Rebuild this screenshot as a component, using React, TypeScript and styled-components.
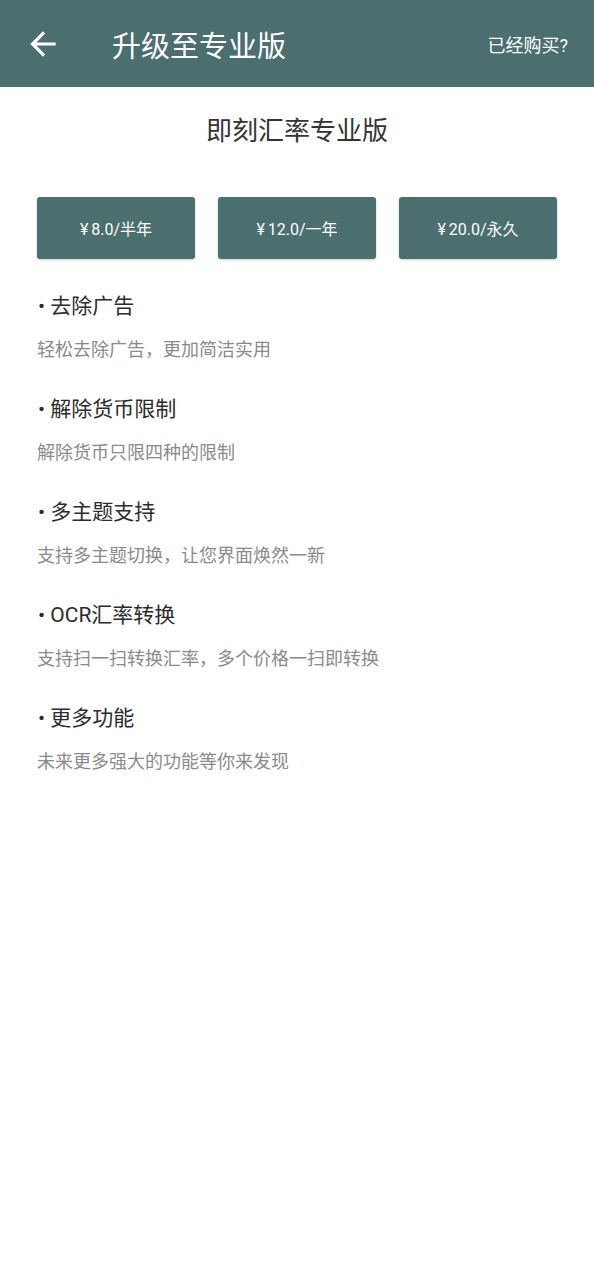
import * as React from "react"
import styled, { createGlobalStyle } from "styled-components"

const GlobalStyle = createGlobalStyle`
  html, body {
    margin: 0;
    padding: 0;
    background: #ffffff;
  }
  body {
    font-family: "Roboto", "Noto Sans CJK SC", sans-serif;
  }
`

const Page = styled.div`
  width: 100%;
  min-height: 1280px;
  background: #ffffff;
`

const Header = styled.header`
  height: 87px;
  background: #4b6e6e;
  display: flex;
  align-items: center;
  padding: 0 26px 0 24px;
  box-sizing: border-box;
  color: #ffffff;
`

const BackButton = styled.button`
  width: 38px;
  height: 38px;
  padding: 0;
  border: none;
  background: none;
  color: #ffffff;
  display: flex;
  align-items: center;
  justify-content: center;
`

const HeaderTitle = styled.h1`
  margin: 0 0 0 50px;
  flex: 1;
  font: 400 29px "Roboto", "Noto Sans CJK SC", sans-serif;
`

const HeaderAction = styled.span`
  font: 400 18px "Roboto", "Noto Sans CJK SC", sans-serif;
`

const Content = styled.main`
  padding: 0 37px;
`

const Title = styled.h2`
  margin: 26px 0 0;
  text-align: center;
  color: #333333;
  font: 400 26px/36px "Roboto", "Noto Sans CJK SC", sans-serif;
`

const PlanRow = styled.div`
  display: grid;
  grid-template-columns: repeat(3, 1fr);
  gap: 23px;
  margin-top: 48px;
`

const PlanButton = styled.button`
  height: 62px;
  border: none;
  border-radius: 3px;
  background: #4b6e6e;
  color: #ffffff;
  font: 400 16px "Roboto", "Noto Sans CJK SC", sans-serif;
  box-shadow: 0 1px 3px rgba(0, 0, 0, 0.2);
`

const Yen = styled.span`
  margin-right: 3px;
`

const FeatureList = styled.ul`
  list-style: none;
  margin: 32px 0 0;
  padding: 0;
  display: flex;
  flex-direction: column;
  gap: 31px;
`

const Feature = styled.li`
  display: flex;
  flex-direction: column;
  gap: 16px;
`

const FeatureTitle = styled.div`
  color: #2b2b2b;
  font: 400 21px/30px "Roboto", "Noto Sans CJK SC", sans-serif;
  margin-left: 1px;
`

const FeatureDesc = styled.div`
  color: #8a8a8a;
  font: 400 18px/26px "Roboto", "Noto Sans CJK SC", sans-serif;
`

const plans = ["8.0/半年", "12.0/一年", "20.0/永久"]

const features = [
  { title: "去除广告", desc: "轻松去除广告，更加简洁实用" },
  { title: "解除货币限制", desc: "解除货币只限四种的限制" },
  { title: "多主题支持", desc: "支持多主题切换，让您界面焕然一新" },
  { title: "OCR汇率转换", desc: "支持扫一扫转换汇率，多个价格一扫即转换" },
  { title: "更多功能", desc: "未来更多强大的功能等你来发现" },
]

const App: React.FC = () => {
  return (
    <Page>
      <GlobalStyle />
      <Header>
        <BackButton aria-label="返回">
          <svg width="38" height="38" viewBox="0 0 24 24" fill="currentColor">
            <path d="M20 11H7.83l5.59-5.59L12 4l-8 8 8 8 1.41-1.41L7.83 13H20v-2z" />
          </svg>
        </BackButton>
        <HeaderTitle>升级至专业版</HeaderTitle>
        <HeaderAction>已经购买?</HeaderAction>
      </Header>
      <Content>
        <Title>即刻汇率专业版</Title>
        <PlanRow>
          {plans.map((p) => (
            <PlanButton key={p}>
              <Yen>¥</Yen>
              {p}
            </PlanButton>
          ))}
        </PlanRow>
        <FeatureList>
          {features.map((f) => (
            <Feature key={f.title}>
              <FeatureTitle>• {f.title}</FeatureTitle>
              <FeatureDesc>{f.desc}</FeatureDesc>
            </Feature>
          ))}
        </FeatureList>
      </Content>
    </Page>
  )
}

export default App
